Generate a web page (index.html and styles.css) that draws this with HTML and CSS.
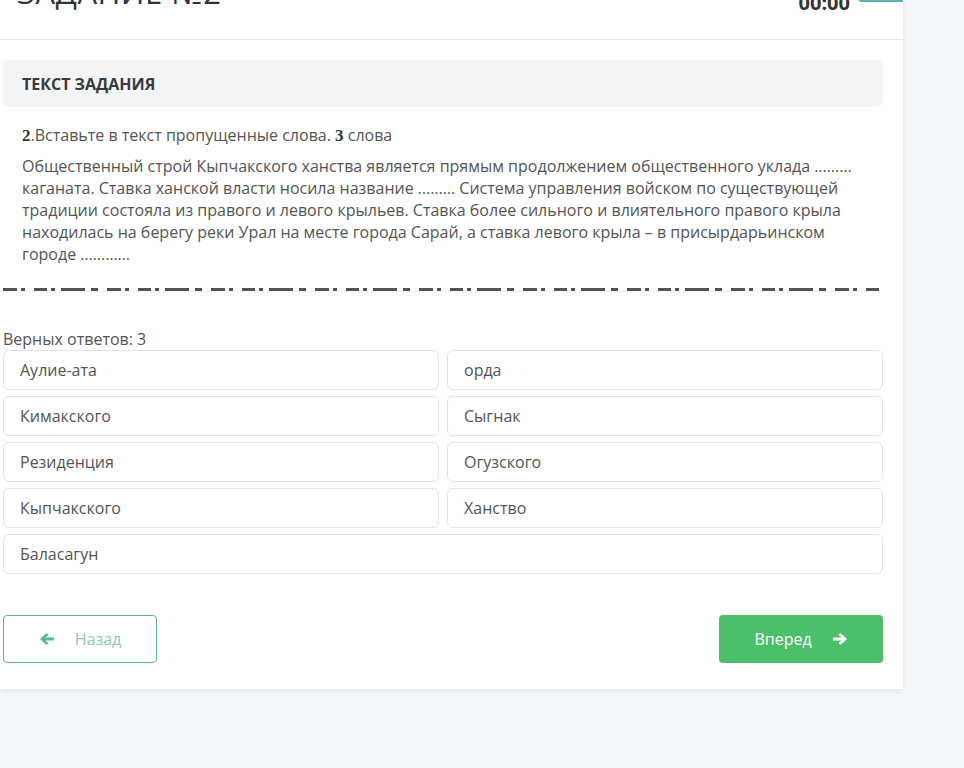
FILE: index.html
```html
<!DOCTYPE html>
<html lang="ru">
<head>
<meta charset="utf-8">
<title>Задание</title>
<link rel="stylesheet" href="styles.css">
</head>
<body>
<div class="card">
  <div class="header">
    <div class="title">ЗАДАНИЕ №2</div>
    <div class="header-right">
      <div class="timer">00:00</div>
      <div class="finish-btn"></div>
    </div>
  </div>
  <div class="content">
    <div class="section-title">ТЕКСТ ЗАДАНИЯ</div>
    <div class="question">
      <p class="q-head"><b class="num">2</b>.Вставьте в текст пропущенные слова. <b class="num">3</b> слова</p>
      <p class="q-text">Общественный строй Кыпчакского ханства является прямым продолжением общественного уклада ……… каганата. Ставка ханской власти носила название ……… Система управления войском по существующей традиции состояла из правого и левого крыльев. Ставка более сильного и влиятельного правого крыла находилась на берегу реки Урал на месте города Сарай, а ставка левого крыла – в присырдарьинском городе …………</p>
    </div>
    <div class="dash-line"></div>
    <div class="answers-label">Верных ответов: 3</div>
    <div class="options">
      <div class="option">Аулие-ата</div>
      <div class="option">орда</div>
      <div class="option">Кимакского</div>
      <div class="option">Сыгнак</div>
      <div class="option">Резиденция</div>
      <div class="option">Огузского</div>
      <div class="option">Кыпчакского</div>
      <div class="option">Ханство</div>
      <div class="option wide">Баласагун</div>
    </div>
    <div class="nav">
      <div class="btn btn-back">
        <svg class="arr" viewBox="0 0 16 16" width="16" height="16"><path d="M1 8 L7.5 2 L9.5 4 L6.5 6.5 H15 V9.5 H6.5 L9.5 12 L7.5 14 Z" fill="#5bb5ae"/></svg>
        <span>Назад</span>
      </div>
      <div class="btn btn-next">
        <span>Вперед</span>
        <svg class="arr" viewBox="0 0 16 16" width="16" height="16"><path d="M15 8 L8.5 2 L6.5 4 L9.5 6.5 H1 V9.5 H9.5 L6.5 12 L8.5 14 Z" fill="#ffffff"/></svg>
      </div>
    </div>
  </div>
</div>
</body>
</html>
```

FILE: styles.css
```css
html, body {
  margin: 0;
  padding: 0;
}
body {
  background: #f4f7fa;
  font-family: "Open Sans", "Noto Sans", sans-serif;
  color: #444;
  height: 768px;
  overflow: hidden;
}
.card {
  width: 903px;
  margin-top: -40px;
  background: #fff;
  box-shadow: 0 2px 6px rgba(0,0,0,0.08);
  padding-bottom: 26px;
}
.header {
  height: 80px;
  box-sizing: border-box;
  border-bottom: 1px solid #e6e6e6;
  display: flex;
  justify-content: space-between;
  padding: 0 0 0 17px;
}
.title {
  font-size: 31px;
  line-height: 40px;
  padding-top: 12px;
  color: #333;
  letter-spacing: 0.5px;
}
.header-right {
  display: flex;
  align-items: flex-start;
}
.timer {
  padding-top: 30px;
  margin-right: 8px;
  font-size: 20px;
  font-weight: 700;
  line-height: 26px;
  color: #333;
}
.finish-btn {
  width: 45px;
  height: 42px;
  background: #5bb5ae;
  border-radius: 4px 0 0 4px;
}
.content {
  padding: 20px 20px 0 3px;
}
.section-title {
  background: #f3f4f6;
  border-radius: 6px;
  height: 47px;
  display: flex;
  align-items: center;
  padding-left: 19px;
  font-size: 16px;
  font-weight: 700;
  color: #3a3a3a;
}
.question {
  padding: 17px 19px 0 19px;
}
.question p {
  margin: 0;
  font-size: 16px;
  line-height: 22px;
  color: #555;
}
.q-head {
  margin-bottom: 8px !important;
}
.num {
  font-family: "Liberation Serif", "DejaVu Serif", serif;
  font-size: 17px;
  color: #333;
}
.dash-line {
  margin-top: 23px;
  height: 3px;
  background-image: repeating-linear-gradient(90deg,
    #333 0, #333 14px, transparent 14px, transparent 18px,
    #333 18px, #333 22px, transparent 22px, transparent 31px,
    #333 31px, #333 44px, transparent 44px, transparent 48px,
    #333 48px, #333 52px, transparent 52px, transparent 58px,
    #333 58px, #333 82px, transparent 82px, transparent 88px,
    #333 88px, #333 95px, transparent 95px, transparent 104px);
  opacity: 0.85;
}
.answers-label {
  margin-top: 37px;
  font-size: 16px;
  line-height: 22px;
  color: #555;
}
.options {
  display: grid;
  grid-template-columns: 1fr 1fr;
  column-gap: 8px;
  row-gap: 6px;
}
.option {
  height: 40px;
  box-sizing: border-box;
  border: 1px solid #e2e2e2;
  border-radius: 6px;
  display: flex;
  align-items: center;
  padding-left: 16px;
  font-size: 16px;
  color: #555;
}
.option.wide {
  grid-column: 1 / 3;
}
.nav {
  margin-top: 41px;
  display: flex;
  justify-content: space-between;
}
.btn {
  height: 48px;
  box-sizing: border-box;
  border-radius: 4px;
  display: flex;
  align-items: center;
  justify-content: center;
  font-size: 16px;
  gap: 20px;
}
.btn-back {
  width: 154px;
  border: 1px solid #5bb5ae;
  color: #8fc6c2;
}
.btn-next {
  width: 164px;
  background: #4cbf68;
  color: #fff;
}
```
